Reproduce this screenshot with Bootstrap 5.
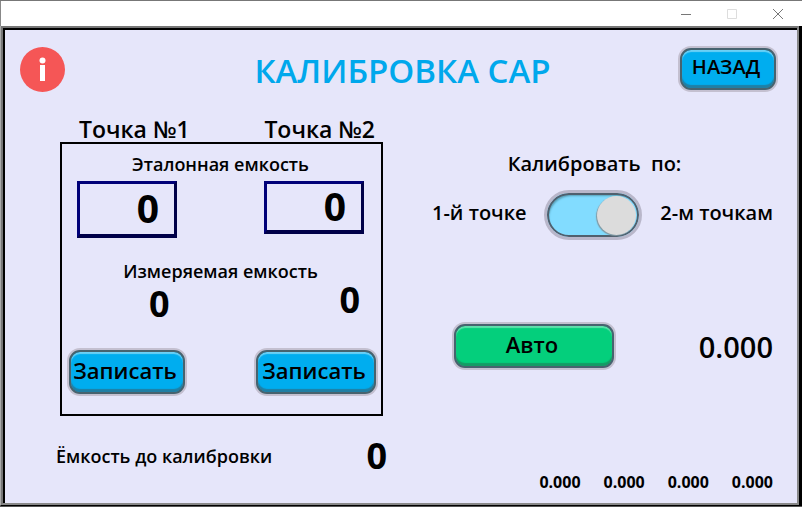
<!DOCTYPE html>
<html lang="ru">
<head>
<meta charset="utf-8">
<meta name="viewport" content="width=device-width, initial-scale=1">
<title>Калибровка CAP</title>
<link href="https://cdn.jsdelivr.net/npm/bootstrap@5.3.0/dist/css/bootstrap.min.css" rel="stylesheet">
<style>
body{font-family:"Trebuchet MS","Open Sans","Noto Sans",sans-serif;font-weight:600;color:#000;background:#222;line-height:1}
button{font-weight:600}
.app-window{border-top:1px solid #777;background:#fff;border-bottom:1px solid #555}
.title-bar{height:25px;padding-right:18px;gap:34px;border-left:1px solid #888}
.title-bar button{line-height:0;color:#777}
.frame{border:1px solid #000;border-top:0;border-left-color:#aaa;border-right-width:3px}
.screen{background:#e6e6fa;border:2px solid #777;border-right-color:#888;border-bottom-color:#888}
.screen-in{border-top:2px solid #000;border-left:2px solid #000}
.head{padding:13px 21px 0 15px}
.head h1{font-size:33px;font-weight:600;color:#00a8ec;line-height:50px;padding:3px 0 0 60px}
.hmi-btn{border:2px solid #47636f;border-radius:11px;background:#00adef;color:#000;line-height:24px;box-shadow:0 0 0 2px #c4c0d0,inset 0 2px 1px #6bd0f5,inset 0 -3px 1px #207fa4;padding:0 4px 4px 0}
.hmi-green{background:#04cf7c;box-shadow:0 0 0 2px #c4c0d0,inset 0 2px 1px #60dfac,inset 0 -3px 1px #159b65}
.back{font-size:20px;width:96px;height:42px;margin-top:5px}
.left-pane{padding:20px 18px 0 55px}
.points{font-size:23px;line-height:26px;padding:0 8px 0 19px}
.group-box{border:2px solid #000;height:274px;padding:7px 5px 20px 7px}
.caption-text{font-size:18px;line-height:26px}
.field{width:100px;height:57px;border:3px solid #000078;border-right-color:#000048;border-bottom:4px solid #000048;background:transparent;font-size:39px;font-weight:700;text-align:right;padding:0 15px 4px 0}
.field-b{height:53px}
.val{font-size:36px;line-height:32px;font-weight:700}
.rec{font-size:22px;width:116px;height:44px}
.rec-b{width:120px}
.before{margin:24px -4px 0 -4px}
.right-pane{padding:56px 24px 13px 31px}
.cal{font-size:20px;line-height:24px}
.cal-title{padding-right:16px}
.cal-row{margin-top:14px}
.cal-row label{padding-bottom:5px}
.switch{appearance:none;width:98px;height:50px;border-radius:25px;border:3px solid #b9b7ca;background:#82dcff;box-shadow:inset 0 0 0 2px #50606e,inset 2px 3px 2px #58a0b8;padding:3px;display:flex;cursor:pointer}
.switch::before{content:"";width:39px;height:39px;border-radius:50%;background:#dcdcdc;box-shadow:-1px 1px 1px #829aa4}
.switch:checked::before{margin-left:auto}
.auto-row{margin-top:84px;padding-left:22px}
.auto{font-size:22px;width:160px;height:44px}
.num{font-size:29px}
.small-nums{font-size:16px;font-weight:700;gap:23px}
</style>
<script src="https://cdn.jsdelivr.net/npm/bootstrap@5.3.0/dist/js/bootstrap.bundle.min.js"></script>
</head>
<body>
<div class="app-window min-vh-100 d-flex flex-column">
  <div class="title-bar d-flex justify-content-end align-items-center">
    <button class="border-0 bg-transparent p-0" aria-label="Свернуть"><svg width="12" height="12"><path d="M1 6.500h10" stroke="currentColor"/></svg></button>
    <button class="border-0 bg-transparent p-0" aria-label="Развернуть" disabled><svg width="12" height="12"><path d="M1.500 1.500h9v9h-9z" fill="none" stroke="#ddd"/></svg></button>
    <button class="border-0 bg-transparent p-0" aria-label="Закрыть"><svg width="12" height="12"><path d="M1 1l10 10M11 1L1 11" stroke="currentColor"/></svg></button>
  </div>
  <main class="frame flex-grow-1 d-flex">
   <div class="screen flex-grow-1 d-flex">
    <div class="screen-in flex-grow-1 d-flex flex-column">
      <header class="head d-flex align-items-start">
        <button class="border-0 bg-transparent p-0 lh-1" aria-label="Информация"><svg class="d-block mt-1" width="45" height="45" viewBox="0 0 45 45"><circle cx="22.500" cy="22.500" r="22.500" fill="#f55656"/><circle cx="22.500" cy="13.500" r="3" fill="#fff"/><path d="M20 18h5v16h-5z" fill="#fff"/></svg></button>
        <h1 class="flex-grow-1 text-center m-0">КАЛИБРОВКА CAP</h1>
        <button class="hmi-btn back">НАЗАД</button>
      </header>
      <div class="row g-0 flex-grow-1">
        <section class="col-6 left-pane">
          <div class="points d-flex justify-content-between"><label for="p1">Точка №1</label><label for="p2">Точка №2</label></div>
          <div class="group-box d-flex flex-column">
            <div class="caption-text text-center pe-1">Эталонная емкость</div>
            <div class="d-flex justify-content-between align-items-start mt-1 ps-2 pe-2 me-1">
              <input class="field" id="p1" value="0"><input class="field field-b" id="p2" value="0">
            </div>
            <div class="caption-text text-center mt-3 pt-1 pe-1">Измеряемая емкость</div>
            <div class="d-flex justify-content-between align-items-start val ps-5 pe-3">
              <output class="ps-4 ms-2 pt-1">0</output><output>0</output>
            </div>
            <div class="d-flex justify-content-between mt-auto">
              <button class="hmi-btn rec">Записать</button><button class="hmi-btn rec rec-b">Записать</button>
            </div>
          </div>
          <div class="before d-flex justify-content-between align-items-center"><span class="caption-text">Ёмкость до калибровки</span><output class="val">0</output></div>
        </section>
        <section class="col-6 right-pane d-flex flex-column">
          <div class="cal cal-title text-center" id="mode">Калибровать &nbsp;по:</div>
          <div class="cal cal-row d-flex align-items-center justify-content-between">
            <label for="sw">1-й точке</label>
            <input class="switch" type="checkbox" role="switch" id="sw" aria-describedby="mode" checked>
            <label for="sw">2-м точкам</label>
          </div>
          <div class="auto-row d-flex align-items-center justify-content-between"><button class="hmi-btn hmi-green auto">Авто</button><output class="num">0.000</output></div>
          <div class="small-nums d-flex justify-content-end mt-auto"><output>0.000</output><output>0.000</output><output>0.000</output><output>0.000</output></div>
        </section>
      </div>
    </div>
   </div>
  </main>
</div>
</body>
</html>
